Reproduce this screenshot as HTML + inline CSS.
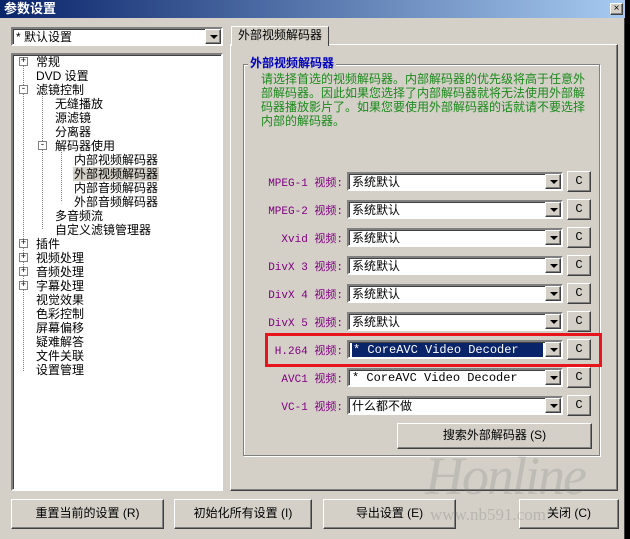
<!DOCTYPE html>
<html><head><meta charset="utf-8"><style>
*{margin:0;padding:0;box-sizing:border-box}
body{width:630px;height:539px;background:#000;position:relative;overflow:hidden;font-family:"Liberation Sans","Noto Sans CJK SC","WenQuanYi Zen Hei",sans-serif;font-size:12px;color:#000}
.a{position:absolute}
.win{left:0;top:0;width:625px;height:539px;background:#d4d0c8;border-right:1px solid #404040}
.title{left:0;top:0;width:625px;height:18px;background:linear-gradient(90deg,#0a246a,#a6caf0);color:#fff;font-weight:bold;font-size:13px;line-height:18px;padding-left:4px}
.sunk{background:#fff;border:2px solid;border-color:#808080 #fff #fff #808080;box-shadow:inset 1px 1px 0 #404040}
.btn{background:#d4d0c8;border:1px solid;border-color:#fff #404040 #404040 #fff;box-shadow:inset -1px -1px 0 #808080;text-align:center}
.arr{width:16px;top:0;right:0;bottom:0}
.arr:after{content:"";position:absolute;left:4px;top:5px;border-left:4px solid transparent;border-right:4px solid transparent;border-top:4px solid #000}
.ti{position:absolute;height:14px;line-height:14px;white-space:nowrap}
.bx{position:absolute;width:9px;height:9px;border:1px solid #808080;background:#fff;font-size:9px;line-height:7px;text-align:center;font-family:"Liberation Mono",monospace}
.lab{position:absolute;right:287px;color:#800080;font-family:"Liberation Mono","Noto Sans CJK SC",monospace;font-size:11px;white-space:nowrap}
.cb{position:absolute;left:347px;width:216px;height:19px}
.cb span{position:absolute;left:3px;top:1px;line-height:14px}
.cbt{position:absolute;left:567px;width:24px;height:21px;line-height:18px;font-family:"Liberation Mono",monospace}
</style></head><body>
<div class="a win"></div>
<div class="a title">参数设置</div>
<div class="a btn" style="left:610px;top:3px;width:13px;height:12px;font-size:10px;line-height:9px">×</div>
<div class="a sunk" style="left:11px;top:27px;width:212px;height:19px"><span class="a" style="left:3px;top:1px;line-height:14px">* 默认设置</span><div class="a btn arr"></div></div>
<div class="a sunk" style="left:11px;top:53px;width:212px;height:438px"></div>
<div class="a" style="left:13px;top:55px;width:208px;height:434px;overflow:hidden">
<div class="a" style="left:10px;top:6px;width:0;height:310px;border-left:1px dotted #808080"></div>
<div class="a" style="left:29px;top:34px;width:0;height:140px;border-left:1px dotted #808080"></div>
<div class="a" style="left:48px;top:90px;width:0;height:56px;border-left:1px dotted #808080"></div>
<div class="bx" style="left:6px;top:2px">+</div>
<div class="bx" style="left:6px;top:30px">-</div>
<div class="bx" style="left:25px;top:86px">-</div>
<div class="bx" style="left:6px;top:184px">+</div>
<div class="bx" style="left:6px;top:198px">+</div>
<div class="bx" style="left:6px;top:212px">+</div>
<div class="bx" style="left:6px;top:226px">+</div>
<div class="ti" style="left:23px;top:0">常规</div>
<div class="ti" style="left:23px;top:14px">DVD 设置</div>
<div class="ti" style="left:23px;top:28px">滤镜控制</div>
<div class="ti" style="left:42px;top:42px">无缝播放</div>
<div class="ti" style="left:42px;top:56px">源滤镜</div>
<div class="ti" style="left:42px;top:70px">分离器</div>
<div class="ti" style="left:42px;top:84px">解码器使用</div>
<div class="ti" style="left:61px;top:98px">内部视频解码器</div>
<div class="ti" style="left:60px;top:112px;background:#d4d0c8;padding:0 1px">外部视频解码器</div>
<div class="ti" style="left:61px;top:126px">内部音频解码器</div>
<div class="ti" style="left:61px;top:140px">外部音频解码器</div>
<div class="ti" style="left:42px;top:154px">多音频流</div>
<div class="ti" style="left:42px;top:168px">自定义滤镜管理器</div>
<div class="ti" style="left:23px;top:182px">插件</div>
<div class="ti" style="left:23px;top:196px">视频处理</div>
<div class="ti" style="left:23px;top:210px">音频处理</div>
<div class="ti" style="left:23px;top:224px">字幕处理</div>
<div class="ti" style="left:23px;top:238px">视觉效果</div>
<div class="ti" style="left:23px;top:252px">色彩控制</div>
<div class="ti" style="left:23px;top:266px">屏幕偏移</div>
<div class="ti" style="left:23px;top:280px">疑难解答</div>
<div class="ti" style="left:23px;top:294px">文件关联</div>
<div class="ti" style="left:23px;top:308px">设置管理</div>
</div>
<div class="a" style="left:230px;top:44px;width:388px;height:447px;border:1px solid;border-color:#fff #404040 #404040 #fff;box-shadow:inset -1px -1px 0 #808080"></div>
<div class="a" style="left:231px;top:26px;width:98px;height:20px;background:#d4d0c8;border:1px solid;border-bottom:none;border-color:#fff #404040 #404040 #fff;line-height:17px;padding-left:6px">外部视频解码器</div>
<div class="a" style="left:243px;top:64px;width:357px;height:392px;border:1px solid #808080;box-shadow:1px 1px 0 #fff,inset 1px 1px 0 #fff"></div>
<div class="a" style="left:248px;top:56px;background:#d4d0c8;color:#0000c0;font-weight:bold;padding:0 2px;line-height:14px">外部视频解码器</div>
<div class="a" style="left:261px;top:72px;width:330px;color:#1a8a1a;line-height:14px">请选择首选的视频解码器。内部解码器的优先级将高于任意外部解码器。因此如果您选择了内部解码器就将无法使用外部解码器播放影片了。如果您要使用外部解码器的话就请不要选择内部的解码器。</div>
<div class="lab" style="top:174px">MPEG-1 视频:</div><div class="cb sunk" style="top:172px"><span>系统默认</span><div class="a btn arr"></div></div><div class="cbt btn" style="top:171px">C</div>
<div class="lab" style="top:202px">MPEG-2 视频:</div><div class="cb sunk" style="top:200px"><span>系统默认</span><div class="a btn arr"></div></div><div class="cbt btn" style="top:199px">C</div>
<div class="lab" style="top:230px">Xvid 视频:</div><div class="cb sunk" style="top:228px"><span>系统默认</span><div class="a btn arr"></div></div><div class="cbt btn" style="top:227px">C</div>
<div class="lab" style="top:258px">DivX 3 视频:</div><div class="cb sunk" style="top:256px"><span>系统默认</span><div class="a btn arr"></div></div><div class="cbt btn" style="top:255px">C</div>
<div class="lab" style="top:286px">DivX 4 视频:</div><div class="cb sunk" style="top:284px"><span>系统默认</span><div class="a btn arr"></div></div><div class="cbt btn" style="top:283px">C</div>
<div class="lab" style="top:314px">DivX 5 视频:</div><div class="cb sunk" style="top:312px"><span>系统默认</span><div class="a btn arr"></div></div><div class="cbt btn" style="top:311px">C</div>
<div class="lab" style="top:342px">H.264 视频:</div><div class="cb sunk" style="top:340px"><span style="background:#0a246a;color:#fff;width:191px;font-family:'Liberation Mono',monospace;padding-left:1px">* CoreAVC Video Decoder</span><div class="a btn arr"></div></div><div class="cbt btn" style="top:339px">C</div>
<div class="lab" style="top:370px">AVC1 视频:</div><div class="cb sunk" style="top:368px"><span style="font-family:'Liberation Mono',monospace">* CoreAVC Video Decoder</span><div class="a btn arr"></div></div><div class="cbt btn" style="top:367px">C</div>
<div class="lab" style="top:398px">VC-1 视频:</div><div class="cb sunk" style="top:396px"><span>什么都不做</span><div class="a btn arr"></div></div><div class="cbt btn" style="top:395px">C</div>
<div class="a" style="left:265px;top:333px;width:337px;height:34px;border:3px solid #e8141c"></div>
<div class="a btn" style="left:397px;top:423px;width:195px;height:26px;line-height:23px">搜索外部解码器 (S)</div>
<div class="a btn" style="left:11px;top:499px;width:153px;height:30px;line-height:27px">重置当前的设置 (R)</div>
<div class="a btn" style="left:174px;top:499px;width:138px;height:30px;line-height:27px">初始化所有设置 (I)</div>
<div class="a btn" style="left:323px;top:499px;width:133px;height:30px;line-height:27px">导出设置 (E)</div>
<div class="a btn" style="left:519px;top:499px;width:100px;height:30px;line-height:27px">关闭 (C)</div>
<div class="a" style="left:425px;top:445px;font-family:'Liberation Serif',serif;font-style:italic;font-size:54px;color:rgba(120,120,120,0.22);letter-spacing:-2px">Honline</div>
<div class="a" style="left:430px;top:505px;font-family:'Liberation Serif',serif;font-size:17px;color:rgba(120,120,120,0.3)">www.nb591.com</div>
</body></html>
